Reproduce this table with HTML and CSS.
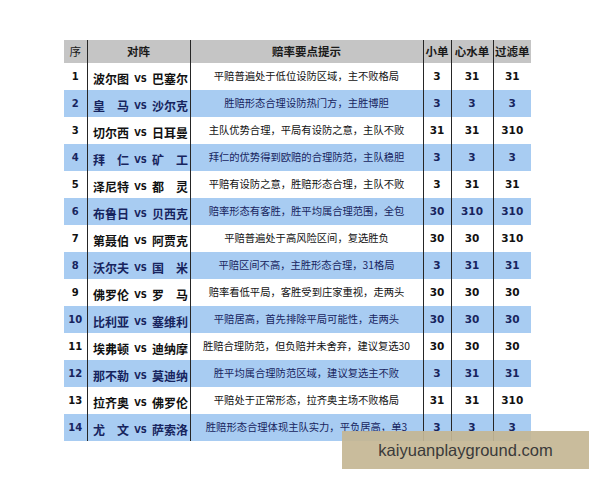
FILE: index.html
```html
<!DOCTYPE html>
<html lang="zh">
<head>
<meta charset="utf-8">
<title>赔率要点提示</title>
<link rel="stylesheet" href="styles.css">
</head>
<body>
<div class="page">
<table class="odds">
<colgroup>
<col class="c-no"><col class="c-match"><col class="c-tip"><col class="c-a"><col class="c-b"><col class="c-c">
</colgroup>
<thead>
<tr><th>序</th><th>对阵</th><th>赔率要点提示</th><th>小单</th><th>心水单</th><th>过滤单</th></tr>
</thead>
<tbody>
<tr><td class="no">1</td><td class="match"><span class="tm">波尔图</span><span class="vs">VS</span><span class="tm">巴塞尔</span></td><td class="tip">平赔普遍处于低位设防区域，主不败格局</td><td class="num">3</td><td class="num">31</td><td class="num">31</td></tr>
<tr class="alt"><td class="no">2</td><td class="match"><span class="tm">皇　马</span><span class="vs">VS</span><span class="tm">沙尔克</span></td><td class="tip">胜赔形态合理设防热门方，主胜博胆</td><td class="num">3</td><td class="num">3</td><td class="num">3</td></tr>
<tr><td class="no">3</td><td class="match"><span class="tm">切尔西</span><span class="vs">VS</span><span class="tm">日耳曼</span></td><td class="tip">主队优势合理，平局有设防之意，主队不败</td><td class="num">31</td><td class="num">31</td><td class="num">310</td></tr>
<tr class="alt"><td class="no">4</td><td class="match"><span class="tm">拜　仁</span><span class="vs">VS</span><span class="tm">矿　工</span></td><td class="tip">拜仁的优势得到欧赔的合理防范，主队稳胆</td><td class="num">3</td><td class="num">3</td><td class="num">3</td></tr>
<tr><td class="no">5</td><td class="match"><span class="tm">泽尼特</span><span class="vs">VS</span><span class="tm">都　灵</span></td><td class="tip">平赔有设防之意，胜赔形态合理，主队不败</td><td class="num">3</td><td class="num">31</td><td class="num">31</td></tr>
<tr class="alt"><td class="no">6</td><td class="match"><span class="tm">布鲁日</span><span class="vs">VS</span><span class="tm">贝西克</span></td><td class="tip">赔率形态有客胜，胜平均属合理范围，全包</td><td class="num">30</td><td class="num">310</td><td class="num">310</td></tr>
<tr><td class="no">7</td><td class="match"><span class="tm">第聂伯</span><span class="vs">VS</span><span class="tm">阿贾克</span></td><td class="tip">平赔普遍处于高风险区间，复选胜负</td><td class="num">30</td><td class="num">30</td><td class="num">310</td></tr>
<tr class="alt"><td class="no">8</td><td class="match"><span class="tm">沃尔夫</span><span class="vs">VS</span><span class="tm">国　米</span></td><td class="tip">平赔区间不高，主胜形态合理，31格局</td><td class="num">3</td><td class="num">31</td><td class="num">31</td></tr>
<tr><td class="no">9</td><td class="match"><span class="tm">佛罗伦</span><span class="vs">VS</span><span class="tm">罗　马</span></td><td class="tip">赔率看低平局，客胜受到庄家重视，走两头</td><td class="num">30</td><td class="num">30</td><td class="num">30</td></tr>
<tr class="alt"><td class="no">10</td><td class="match"><span class="tm">比利亚</span><span class="vs">VS</span><span class="tm">塞维利</span></td><td class="tip">平赔居高，首先排除平局可能性，走两头</td><td class="num">30</td><td class="num">30</td><td class="num">30</td></tr>
<tr><td class="no">11</td><td class="match"><span class="tm">埃弗顿</span><span class="vs">VS</span><span class="tm">迪纳摩</span></td><td class="tip">胜赔合理防范，但负赔并未舍弃，建议复选30</td><td class="num">30</td><td class="num">30</td><td class="num">30</td></tr>
<tr class="alt"><td class="no">12</td><td class="match"><span class="tm">那不勒</span><span class="vs">VS</span><span class="tm">莫迪纳</span></td><td class="tip">胜平均属合理防范区域，建议复选主不败</td><td class="num">3</td><td class="num">31</td><td class="num">31</td></tr>
<tr><td class="no">13</td><td class="match"><span class="tm">拉齐奥</span><span class="vs">VS</span><span class="tm">佛罗伦</span></td><td class="tip">平赔处于正常形态，拉齐奥主场不败格局</td><td class="num">31</td><td class="num">31</td><td class="num">310</td></tr>
<tr class="alt"><td class="no">14</td><td class="match"><span class="tm">尤　文</span><span class="vs">VS</span><span class="tm">萨索洛</span></td><td class="tip">胜赔形态合理体现主队实力，平负居高，单3</td><td class="num">3</td><td class="num">3</td><td class="num">3</td></tr>
</tbody>
</table>
<div class="watermark">kaiyuanplayground.com</div>
</div>
</body>
</html>
```
FILE: styles.css
```css
html, body {
  margin: 0;
  padding: 0;
  background: #ffffff;
}
body {
  font-family: "Noto Sans CJK SC", "DejaVu Sans", sans-serif;
  color: #111;
}
.page {
  position: relative;
  width: 600px;
  height: 480px;
  padding: 40px 0 0 64px;
  box-sizing: border-box;
}
.odds {
  border-collapse: collapse;
  table-layout: fixed;
  width: 467px;
}
.c-no { width: 23px; }
.c-match { width: 103px; }
.c-tip { width: 233px; }
.c-a { width: 28px; }
.c-b { width: 42px; }
.c-c { width: 38px; }
.odds th, .odds td {
  padding: 0;
  border-left: 1px solid #262626;
  text-align: center;
  vertical-align: middle;
  white-space: nowrap;
  overflow: visible;
  line-height: 1;
}
.odds th:first-child, .odds td:first-child {
  border-left: none;
}
.odds th {
  height: 23px;
  background: #c5c5c5;
  font-size: 11.5px;
  font-weight: bold;
  color: #1a1a1a;
}
.odds th:first-child {
  font-weight: normal;
}
.odds td {
  height: 27px;
  background: #ffffff;
}
.odds tr.alt td {
  background: #a8ccf2;
  color: #17245e;
}
.no {
  font-family: "DejaVu Sans", sans-serif;
  font-weight: bold;
  font-size: 10px;
}
.match {
  text-align: left;
}
.match .tm {
  display: inline-block;
  width: 36px;
  font-size: 12px;
  font-weight: bold;
  line-height: 1;
  vertical-align: middle;
}
.match .tm:first-child {
  margin-left: 4px;
}
.match .vs {
  display: inline-block;
  width: 23px;
  text-align: center;
  font-family: "DejaVu Sans", sans-serif;
  font-size: 8.5px;
  font-weight: bold;
  line-height: 1;
  vertical-align: middle;
}
.tip {
  font-size: 10.3px;
}
.num {
  font-family: "DejaVu Sans", sans-serif;
  font-weight: bold;
  font-size: 10.5px;
}
.watermark {
  position: absolute;
  left: 342px;
  top: 431px;
  width: 247px;
  height: 38px;
  background: rgba(196, 182, 148, 0.92);
  color: #3a3a3a;
  font-family: "Liberation Sans", Arial, sans-serif;
  font-size: 16.5px;
  line-height: 38px;
  text-align: center;
}
```
